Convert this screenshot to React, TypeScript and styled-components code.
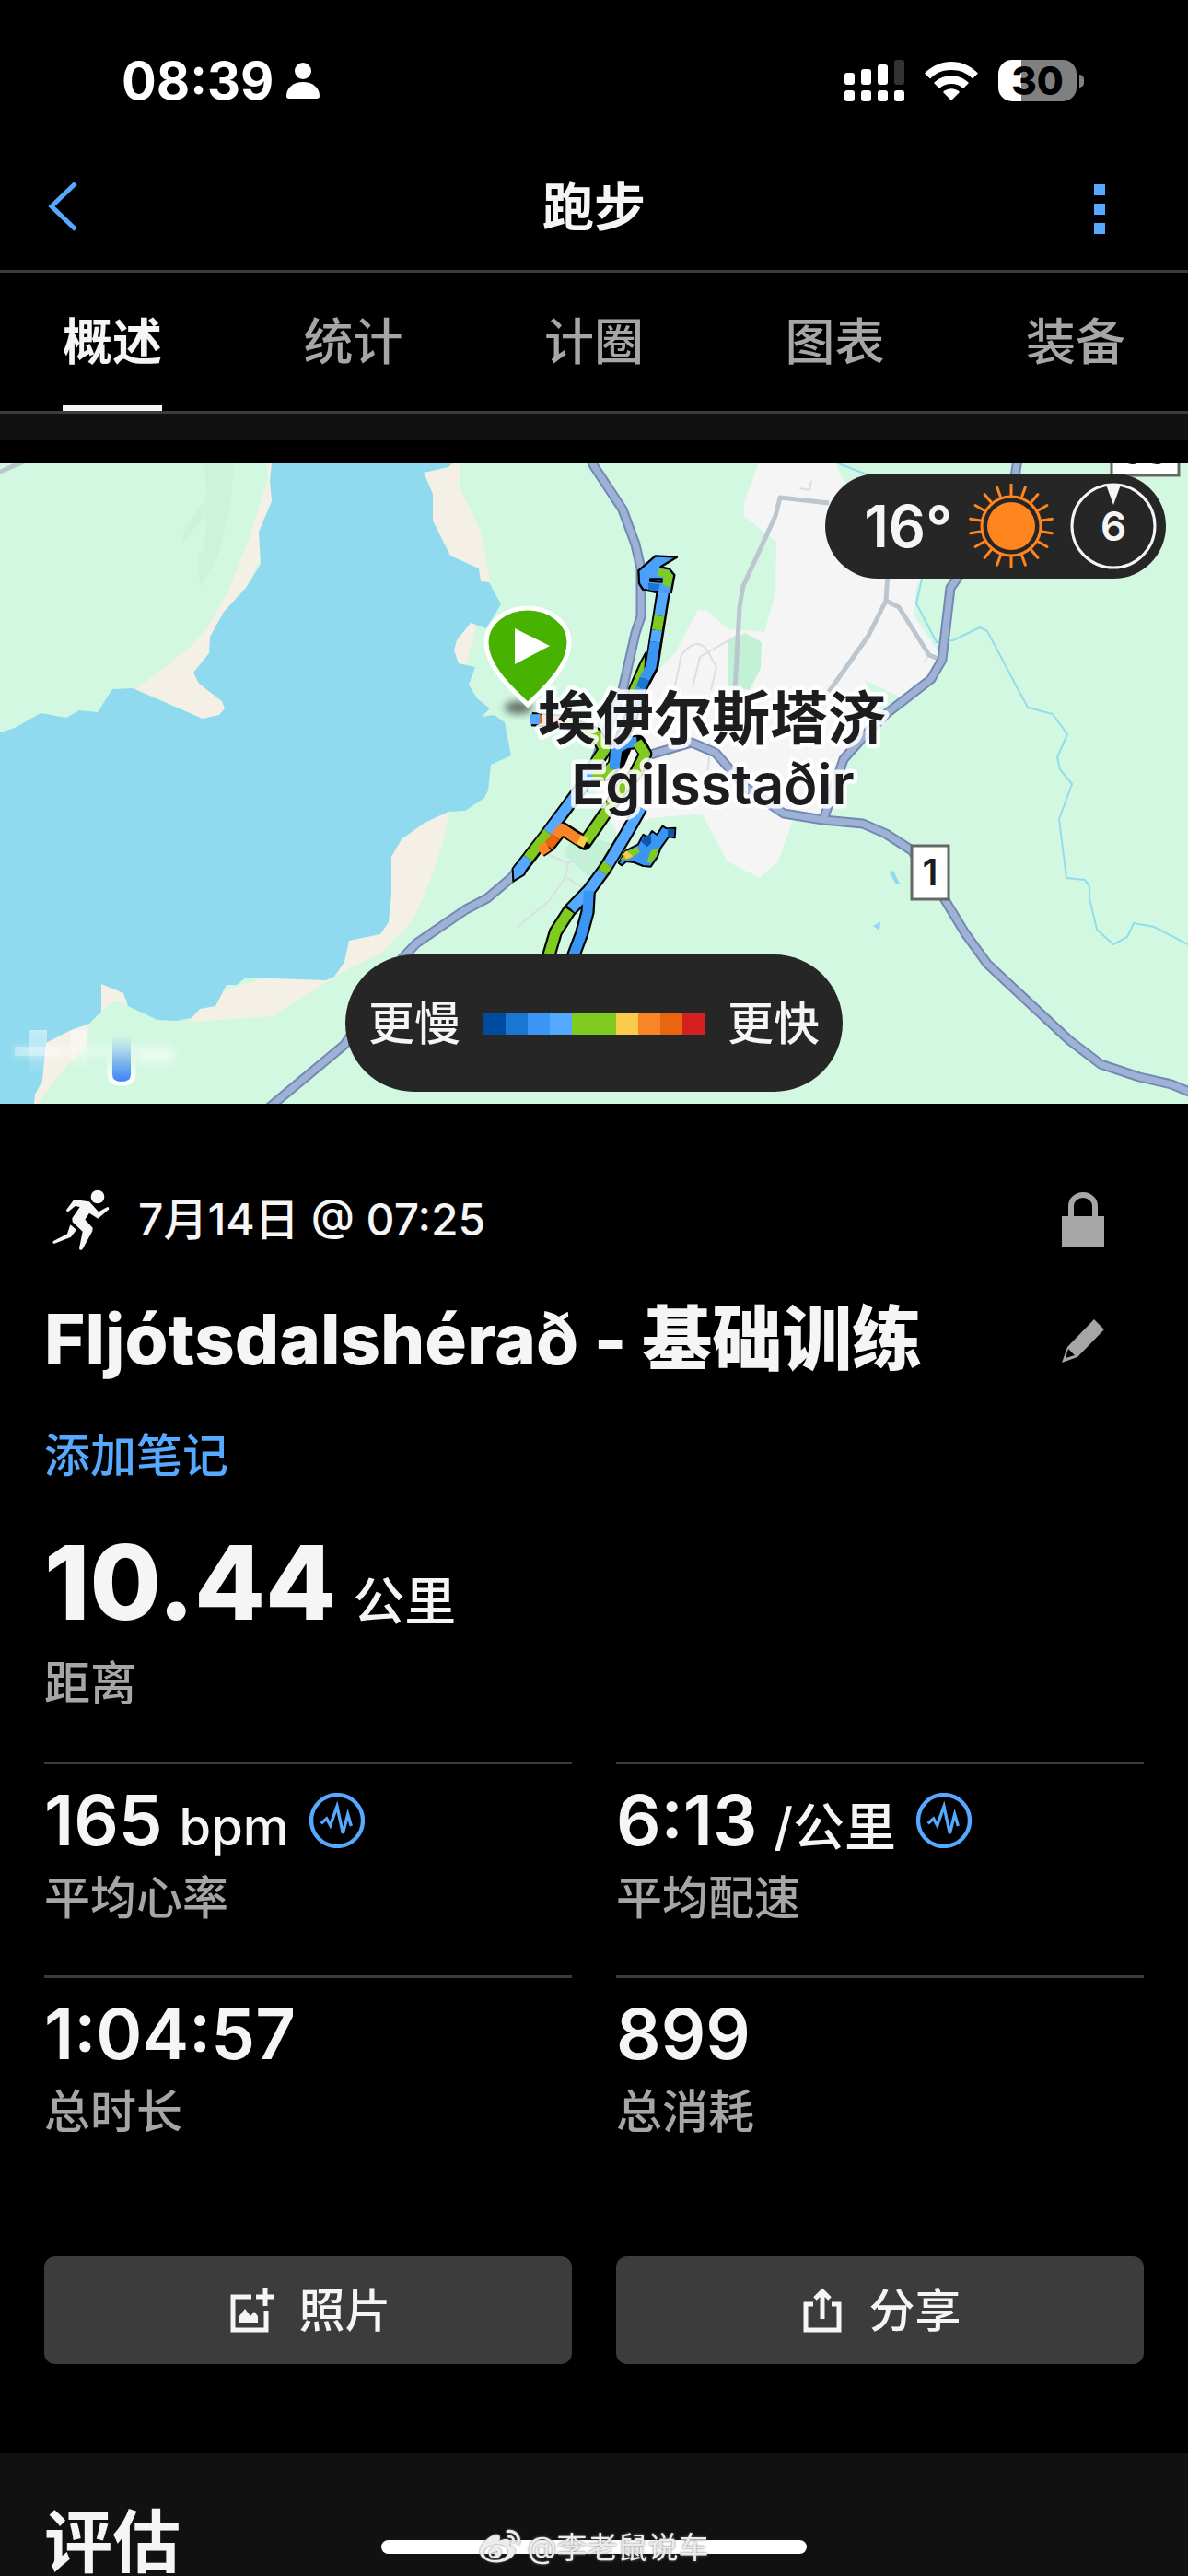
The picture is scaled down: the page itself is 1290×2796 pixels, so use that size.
import React from "react";
import styled, { createGlobalStyle } from "styled-components";
import { FaWeibo } from "react-icons/fa";

const color = {
  text: "#f5f5f5",
  muted: "#a6a6a6",
  line: "#3c3c3c",
  accent: "#55a9ff",
  panel: "#111111",
  pill: "#262626",
};

const GlobalStyle = createGlobalStyle`
  *, *::before, *::after { box-sizing: border-box; }
  html, body { margin: 0; background: #000; }
  body {
    font-family: Inter, "Noto Sans CJK SC", sans-serif;
    font-weight: 500;
    color: ${color.text};
  }
  h1, h2, p, dl, dt, dd { margin: 0; font-weight: inherit; }
  button {
    margin: 0;
    padding: 0;
    border: 0;
    background: none;
    color: inherit;
    font: inherit;
    cursor: pointer;
  }
  svg { display: block; flex: none; }
`;

const Page = styled.div`
  display: flex;
  flex-direction: column;
  min-height: 100vh;
  overflow: hidden;
`;

/* ---------- status bar ---------- */

const StatusBar = styled.div`
  display: flex;
  align-items: center;
  justify-content: space-between;
  height: 157px;
  padding: 18px 113px 0 132px;
  color: #fff;
`;

const StatusGroup = styled.div<{ $gap: number }>`
  display: flex;
  align-items: center;
  gap: ${(p) => p.$gap}px;
`;

const Clock = styled.span`
  font-size: 56px;
  font-weight: 700;
  line-height: 60px;
`;

const Battery = styled.div`
  display: flex;
  align-items: center;
  gap: 3px;
  &::after {
    content: "";
    width: 5px;
    height: 14px;
    border-radius: 0 7px 7px 0;
    background: #808080;
  }
`;

const BatteryBody = styled.span`
  width: 85px;
  height: 45px;
  border-radius: 15px;
  background: linear-gradient(90deg, #fff 0 30%, #808080 30%);
  color: #000;
  font-size: 42px;
  font-weight: 800;
  line-height: 45px;
  text-align: center;
`;

/* ---------- header and tabs ---------- */

const Header = styled.header`
  display: grid;
  grid-template-columns: 1fr auto 1fr;
  align-items: center;
  height: 139px;
  padding: 0 48px;
  border-bottom: 3px solid ${color.line};
  color: ${color.accent};
`;

const HeaderTitle = styled.h1`
  color: ${color.text};
  font-size: 56px;
  font-weight: 700;
  line-height: 64px;
`;

const BackButton = styled.button`
  justify-self: start;
`;

const MenuButton = styled.button`
  justify-self: end;
  padding: 4px 42px 0;
`;

const Tabs = styled.nav`
  display: flex;
  justify-content: space-between;
  padding: 0 68px;
  border-bottom: 3px solid ${color.line};
`;

const Tab = styled.button<{ $active?: boolean }>`
  height: 150px;
  border-top: 8px solid transparent;
  border-bottom: 6px solid ${(p) => (p.$active ? color.text : "transparent")};
  color: ${(p) => (p.$active ? color.text : color.muted)};
  font-size: 54px;
  font-weight: ${(p) => (p.$active ? 700 : 500)};
  line-height: 64px;
`;

const Strip = styled.div`
  height: 29px;
  margin-bottom: 24px;
  background: ${color.panel};
`;

/* ---------- map ---------- */

const MapFrame = styled.section`
  position: relative;
  height: 696px;
  overflow: hidden;
  background: #d2f8e1;
`;

const MapCanvas = styled.svg`
  width: 100%;
  height: 100%;
  font-family: Inter, "Noto Sans CJK SC", sans-serif;
`;

const WeatherPill = styled.div`
  position: absolute;
  top: 12px;
  right: 24px;
  display: flex;
  align-items: center;
  gap: 18px;
  height: 114px;
  padding: 0 10px 0 42px;
  border-radius: 57px;
  background: ${color.pill};
  font-size: 63px;
  font-weight: 600;
`;

const WindDial = styled.div`
  display: grid;
  place-items: center;
  font-size: 44px;
  > * { grid-area: 1 / 1; }
`;

const PacePill = styled.div`
  position: absolute;
  bottom: 13px;
  left: 50%;
  transform: translateX(-50%);
  display: flex;
  align-items: center;
  gap: 25px;
  height: 149px;
  padding: 0 25px;
  border-radius: 75px;
  background: ${color.pill};
  font-size: 50px;
  line-height: 60px;
  white-space: nowrap;
`;

const PaceScale = styled.div`
  display: flex;
`;

const PaceStep = styled.span<{ $color: string }>`
  width: 24px;
  height: 24px;
  background: ${(p) => p.$color};
`;

/* ---------- activity details ---------- */

const Details = styled.main`
  padding: 96px 48px;
`;

const Row = styled.div`
  display: flex;
  align-items: center;
  justify-content: space-between;
  padding-right: 42px;
`;

const DateLine = styled.div`
  display: flex;
  align-items: center;
  gap: 30px;
  height: 60px;
  padding-left: 8px;
  font-size: 48px;
  line-height: 60px;
`;

const TitleRow = styled(Row)`
  margin-top: 53px;
`;

const ActivityTitle = styled.h2`
  font-size: 76px;
  font-weight: 800;
  line-height: 92px;
`;

const NoteLink = styled.a`
  display: block;
  width: max-content;
  margin-top: 51px;
  color: ${color.accent};
  font-size: 50px;
  line-height: 60px;
  text-decoration: none;
`;

const Distance = styled.dl`
  display: flex;
  flex-direction: column-reverse;
  gap: 24px;
  margin: 51px 0 55px;
`;

const Label = styled.dt`
  color: ${color.muted};
  font-size: 50px;
  line-height: 60px;
`;

const Value = styled.dd<{ $large?: boolean }>`
  display: flex;
  align-items: baseline;
  gap: 18px;
  height: ${(p) => (p.$large ? 112 : 76)}px;
  font-size: ${(p) => (p.$large ? 112 : 76)}px;
  font-weight: ${(p) => (p.$large ? 800 : 600)};
  line-height: ${(p) => (p.$large ? 112 : 76)}px;
`;

const Unit = styled.span`
  font-size: 56px;
  font-weight: 500;
`;

const ZoneButton = styled.button`
  align-self: center;
  padding: 2px 4px 0;
`;

const MetricGrid = styled.dl`
  display: grid;
  grid-template-columns: 1fr 1fr;
  column-gap: 48px;
`;

const Metric = styled.div`
  display: flex;
  flex-direction: column-reverse;
  gap: 17px;
  padding: 22px 0 54px;
  border-top: 3px solid ${color.line};
`;

const Actions = styled.div`
  display: grid;
  grid-template-columns: 1fr 1fr;
  gap: 48px;
  margin-top: 73px;
`;

const ActionButton = styled.button`
  display: flex;
  align-items: center;
  justify-content: center;
  gap: 26px;
  height: 117px;
  padding-left: 4px;
  border-radius: 12px;
  background: ${color.line};
  font-size: 50px;
  line-height: 60px;
`;

const Review = styled.section`
  flex: 1;
  padding: 60px 48px 0;
  background: ${color.panel};
`;

const ReviewTitle = styled.h2`
  font-size: 74px;
  font-weight: 700;
  line-height: 74px;
`;

/* ---------- bottom overlay ---------- */

const HomeIndicator = styled.div`
  position: fixed;
  bottom: 24px;
  left: 50%;
  display: flex;
  align-items: center;
  justify-content: center;
  width: 462px;
  height: 15px;
  transform: translateX(-50%);
  border-radius: 8px;
  background: #fff;
`;

const Watermark = styled.span`
  display: flex;
  align-items: center;
  gap: 8px;
  color: #ececec;
  font-size: 33px;
  font-weight: 400;
  line-height: 40px;
  white-space: nowrap;
  text-shadow: 0 0 3px #777;
  svg { filter: drop-shadow(0 0 1px #777); }
`;

/* ---------- icons ---------- */

const PersonIcon = () => (
  <svg width="36" height="39" viewBox="0 0 36 39" fill="currentColor">
    <circle cx="18" cy="9" r="9" />
    <path d="M0 36c0-9 8-15 18-15s18 6 18 15c0 2-1 3-3 3H3c-2 0-3-1-3-3z" />
  </svg>
);

const SignalIcon = () => (
  <svg width="65" height="45" viewBox="0 0 65 45" fill="#fff">
    <rect x="0" y="14" width="11" height="13" rx="3" />
    <rect x="18" y="10" width="11" height="17" rx="3" />
    <rect x="36" y="5" width="11" height="22" rx="3" />
    <rect x="54" y="0" width="11" height="27" rx="3" fill="#333" />
    {[0, 18, 36, 54].map((x) => (
      <rect key={x} x={x} y="33" width="11" height="12" rx="3" />
    ))}
  </svg>
);

const WifiIcon = () => (
  <svg width="58" height="42" viewBox="0 0 58 42" fill="#fff">
    <path d="M0 12.500C8 4.500 18 0 29 0s21 4.500 29 12.500l-6 6C46 12 38 9 29 9S12 12 6 18.500z" />
    <path d="M10 23c5-5 12-8 19-8s14 3 19 8l-6 6c-3.500-3.500-8-5-13-5s-9.500 1.500-13 5z" />
    <path d="M20 33c5-5 13-5 18 0l-9 9z" />
  </svg>
);

const BackIcon = () => (
  <svg width="36" height="54" viewBox="0 0 36 54" fill="none" stroke="currentColor" strokeWidth="5">
    <path d="M34 1 8 26l26 25" />
  </svg>
);

const MoreIcon = () => (
  <svg width="12" height="54" viewBox="0 0 12 54" fill="currentColor">
    <path d="M0 0h12v12H0zM0 21h12v12H0zM0 42h12v12H0z" />
  </svg>
);

const SunIcon = () => {
  const rays = Array.from({ length: 18 }, (_, i) => i * 20);
  return (
    <svg width="92" height="92" viewBox="-46 -46 92 92" stroke="#ff851f" strokeWidth="3" strokeLinecap="round">
      <circle r="26" fill="#ff851f" stroke="none" />
      <circle r="32" fill="none" />
      {rays.map((a) => (
        <path key={a} d="M0-34V-45" transform={`rotate(${a})`} />
      ))}
    </svg>
  );
};

const DialIcon = () => (
  <svg width="94" height="94" viewBox="-47 -47 94 94">
    <circle r="45" fill="none" stroke="#f5f5f5" strokeWidth="3" />
    <path d="M-8-45H8L0-23z" fill="#f5f5f5" />
  </svg>
);

const RunnerIcon = () => (
  <svg width="64" height="66" viewBox="0 0 192 198" fill="#f5f5f5">
    <circle cx="150" cy="24" r="22" />
    <path d="M73 33 123 40 153 73 182 57Q189 58 186 65L151 95 123 77 109 98 134 125 133 136 101 194Q92 202 90 192L101 137 68 106 67 94 92 57 77 54 56 71Q48 74 48 67z" />
    <path d="M61 115 81 131 63 155 10 176Q2 177 5 169L51 145z" />
  </svg>
);

const LockIcon = () => (
  <svg width="48" height="60" viewBox="0 0 48 60">
    <path d="M11 28V15a13 12 0 0 1 26 0v13" fill="none" stroke="#a6a6a6" strokeWidth="6" />
    <path d="M1 26h46v34H1z" fill="#a6a6a6" />
  </svg>
);

const PencilIcon = () => (
  <svg width="48" height="54" viewBox="0 -6 48 54" fill="#a6a6a6">
    <path fillRule="evenodd" d="M36 0 47 11 18 41 1 47 7 30zM8 32 5 42 15 39z" />
  </svg>
);

const PulseIcon = () => (
  <svg width="60" height="60" viewBox="0 0 180 180" fill="none" stroke="#55a9ff">
    <circle cx="90" cy="90" r="84" strokeWidth="13" />
    <path d="M38 100 56 84 68 106 90 44 109 132 125 70 136 108" strokeWidth="10" />
  </svg>
);

const PhotoIcon = () => (
  <svg width="50" height="50" viewBox="0 0 50 50" fill="none" stroke="#f5f5f5" strokeWidth="5">
    <path d="M24 10H4v36h36V25M29 10h20M39 0v20" />
    <path d="M10 38V32l7-9 6 8 4-5 4 5v7z" fill="#f5f5f5" stroke="none" />
  </svg>
);

const ShareIcon = () => (
  <svg width="46" height="50" viewBox="0 0 46 50" fill="none" stroke="#f5f5f5" strokeWidth="5">
    <path d="M11 18H3v28h36V18h-8M21 34V5M13 12l8-8 8 8" />
  </svg>
);

/* ---------- map drawing ---------- */

const sand = [
  "290,0 291,16 271,82 247,141 226,178 210,197 181,221 150,244 144,248 220,280 250,270 260,150 310,50 310,0",
  "500,0 499,27 522,75 532,128 532,134 500,130 440,60 440,0",
  "517,174 517,180 506,220 500,225 480,218 480,170",
  "487,379 487,382 481,412 465,459 448,497 415,532 370,554 296,601 208,607 190,590 350,540 400,450 460,370",
  "110,560 140,570 139,590 128,584 119,587 97,610 94,631 62,667 41,696 20,696 60,610",
];

const water =
  "295,0 293,20 295,42 281,75 283,110 267,136 243,162 228,189 227,207 210,228 216,240 241,259 244,267 238,274 220,278 144,245 122,246 106,271 86,269 72,277 44,272 16,288 -2,294 -2,698 37,696 38,686 46,671 50,630 77,616 97,609 110,596 110,566 134,576 139,590 171,605 191,606 208,603 217,593 234,590 246,567 257,567 267,559 354,562 363,558 374,542 379,519 413,512 422,499 425,469 425,428 436,409 461,391 487,379 505,378 526,364 530,356 533,328 555,318 548,282 537,274 523,276 532,267 518,256 509,241 516,222 498,218 493,204 496,193 511,174 528,180 544,154 531,130 522,129 520,115 489,101 470,63 470,34 460,11 487,5 492,0";

const town =
  "824,0 908,0 912,14 1003,126 995,134 994,148 993,167 1021,209 1023,214 1011,235 980,256 941,237 938,256 962,273 933,299 912,327 892,384 861,388 845,433 825,451 790,433 762,381 707,386 670,402 645,355 698,242 733,207 758,160 768,161 791,181 830,184 842,143 843,86 808,58 808,44";

const highways = [
  "M290 702 374 632 436 539 452 522 506 485 529 473 555 451 610 380 645 327 676 247 690 185 696 167V115L690 89 676 51 645 4 640-6",
  "M894 388 916 322 941 294 962 273 1011 235 1023 214 1032 136 1044 119 1097 49 1105-4",
  "M703 318 751 304 777 315 810 353 851 381 894 388 937 392 962 403 990 421 1025 473 1048 511 1072 544 1161 627 1195 653 1237 667 1272 675 1296 685",
];

const streets = [
  "M900 44 847 38 842 58 807 134 803 157 798 247",
  "M964 120 962 150 943 188 895 256",
  "M962 150 976 157 1009 209 1021 214",
  "M-2 11 28-2",
];

const lanes = [
  "M733 242 740 209Q756 188 768 204L778 222 772 247",
  "M752 244 760 211 800 188",
  "M868 28 879 30 881 20",
  "M561 505 596 476 614 450 645 469M592 424 617 435 638 426M614 450 617 435",
  "M768 340 772 300M1003 217 1009 209",
];

const stream =
  "M908 0 941 13 960 14M1001 126 995 153 1017 195 1035 193 1064 179 1072 183 1116 266 1143 273 1159 295 1148 320 1151 333 1164 349 1150 387 1158 451 1178 453 1183 460V473L1191 507 1209 523 1224 515 1231 500 1253 504 1290 523";

/* The track is drawn on its own 3x grid, first the dark casing, then one stroke per pace band. */
const casing = [
  "M722 180 683 430 646 500 610 610 570 700 560 765",
  "M292 602 400 610 500 650 530 700 450 830 335 985 250 1095",
  "M450 778 530 782 575 740 600 680 640 676 662 715 630 780 585 830 520 925 465 1005 390 958 350 1010 320 1030",
  "M648 890 600 975 530 1090 478 1160 415 1225 370 1295 345 1380",
  "M478 1160 474 1230 455 1300 425 1380",
];

const paceBands: [string, string][] = [
  ["#55aaff", "M722 180 708 265"],
  ["#7fcb1f", "M708 265 700 312"],
  ["#55aaff", "M700 312 694 350"],
  ["#3b95f5", "M694 350 681 430 660 470"],
  ["#1976d2", "M660 470 648 500"],
  ["#3b95f5", "M648 500 610 610 570 700 560 765"],
  ["#55aaff", "M286 602H320"],
  ["#ea650f", "M318 604 400 610"],
  ["#7fcb1f", "M400 610 500 650 530 700 500 745"],
  ["#55aaff", "M500 745 450 830 345 970"],
  ["#7fcb1f", "M345 970 280 1055"],
  ["#55aaff", "M280 1055 245 1100"],
  ["#55aaff", "M450 778H490"],
  ["#7fcb1f", "M490 778 530 782 565 745"],
  ["#3b95f5", "M562 765 565 700 600 680 635 676"],
  ["#7fcb1f", "M635 676 662 715 630 780 585 830 520 925 468 1000"],
  ["#fdcb4b", "M468 1005 438 990"],
  ["#fa8526", "M445 995 390 958 370 985"],
  ["#ea650f", "M370 985 345 1015"],
  ["#fa8526", "M345 1015 318 1033"],
  ["#55aaff", "M648 890 600 975 540 1075"],
  ["#7fcb1f", "M540 1075 522 1100"],
  ["#55aaff", "M522 1100 478 1160 420 1220"],
  ["#7fcb1f", "M415 1225 370 1295 345 1380"],
  ["#3b95f5", "M478 1160 474 1230 455 1300 425 1380"],
];

const Track = () => (
  <svg x="480" y="78" width="320" height="480" viewBox="0 0 960 1440" fill="none" strokeLinejoin="round">
    {casing.map((d) => (
      <path key={d} d={d} stroke="#000" strokeWidth="46" />
    ))}
    <path d="M610 500 645 420 664 385 660 470 625 560 600 560z" fill="#7fcb1f" stroke="#000" strokeWidth="6" />
    <path d="M230 1088 232 1130 268 1108 280 1080 250 1065z" fill="#55aaff" stroke="#000" strokeWidth="6" />
    {paceBands.map(([stroke, d]) => (
      <path key={d} d={d} stroke={stroke} strokeWidth="33" />
    ))}
    <path
      d="M705 190 655 180 642 160 640 118 695 70 765 74 712 106 740 112 757 132 746 192"
      fill="#4aa0fa"
      stroke="#000"
      strokeWidth="7"
    />
    <path d="M703 112 738 116 752 134 744 175 718 162 722 138 703 136z" fill="#7fcb1f" />
    <path d="M672 158 710 162 704 186 672 180z" fill="#1976d2" />
    <path d="M678 145H716V155L678 152z" stroke="#000" strokeWidth="6" />
    <path
      d="M575 1070 598 1030 638 1010 655 978 672 985 684 966 700 978 718 950 732 958 760 956 758 988 738 985 712 1022 702 1050 680 1082 655 1080 625 1068 600 1065 586 1078z"
      fill="#3b95f5"
      stroke="#000"
      strokeWidth="6"
    />
    <path d="M735 958 757 960 755 985 735 980zM660 985 680 975 682 1005 668 1018 648 1000z" fill="#0d57ad" />
    <path d="M580 1060 602 1032 636 1018 645 1035 612 1056zM680 1030 705 1022 698 1048 680 1072 668 1066z" fill="#7fcb1f" />
    <path d="M590 1040 600 1030 622 1048 600 1058z" fill="#fdcb4b" />
    <ellipse cx="583" cy="828" rx="15" ry="22" fill="#7fcb1f" />
  </svg>
);

const StartPin = () => (
  <g>
    <ellipse cx="563" cy="266" rx="15" ry="7" fill="#000" opacity=".55" filter="url(#soft)" />
    <path
      d="M573 263C556 246 528 222 528 195a45 37 0 0 1 90 0C618 222 590 246 573 263z"
      fill="#48b200"
      stroke="#fff"
      strokeWidth="5"
    />
    <path d="M559 180 597 199 559 219z" fill="#fff" />
  </g>
);

const MapDrawing = () => (
  <MapCanvas viewBox="0 0 1290 696" preserveAspectRatio="xMidYMid slice" role="img" aria-label="路线地图">
    <defs>
      <filter id="soft" x="-50%" y="-50%" width="200%" height="200%">
        <feGaussianBlur stdDeviation="4" />
      </filter>
      <linearGradient id="drop" x1="0" y1="0" x2="0" y2="1">
        <stop offset="0" stopColor="#4a8af4" stopOpacity="0" />
        <stop offset="1" stopColor="#3b82f6" />
      </linearGradient>
      <linearGradient id="rim" x1="0" y1="0" x2="0" y2="1">
        <stop offset="0.300" stopColor="#fff" stopOpacity="0" />
        <stop offset="1" stopColor="#fff" />
      </linearGradient>
      <linearGradient id="fade" x1="0" y1="0" x2="0" y2="1">
        <stop offset="0" stopColor="#fff" stopOpacity=".5" />
        <stop offset="1" stopColor="#fff" stopOpacity="0" />
      </linearGradient>
    </defs>
    <rect width="1290" height="696" fill="#d2f8e1" />
    <polygon
      points="222,0 224,40 202,68 194,93 224,56 222,91 215,101 217,136 237,101 251,44 254,0"
      fill="#cef3dd"
    />
    {sand.map((points) => (
      <polygon key={points} points={points} fill="#f4f0e6" />
    ))}
    <polygon points={water} fill="#8fdaee" />
    <polygon points={town} fill="#f5f5f5" />
    <polygon points="791,193 809,185 827,195 826,223 814,247 790,242" fill="#c2f1d5" />
    <polygon points="625,400 668,415 640,450 612,425" fill="#c2f1d5" />
    <polygon points="966,445 970,443 977,457 973,458" fill="#8fdaee" />
    <polygon points="948,503 956,498 955,508" fill="#8fdaee" />
    <g fill="none" strokeLinejoin="round">
      <path d={stream} stroke="#93dcee" strokeWidth="2" />
      {lanes.map((d) => (
        <path key={d} d={d} stroke="#d9dfe4" strokeWidth="2" />
      ))}
      {streets.map((d) => (
        <path key={d} d={d} stroke="#bcc6cf" strokeWidth="5" />
      ))}
      {highways.map((d) => (
        <path key={d} d={d} stroke="#7388b3" strokeWidth="11" />
      ))}
      {highways.map((d) => (
        <path key={d} d={d} stroke="#9fb2d6" strokeWidth="7" />
      ))}
    </g>
    <Track />
    <StartPin />
    <g fill="#1d1d1f" stroke="#fff" strokeOpacity=".85" strokeWidth="9" strokeLinejoin="round" paintOrder="stroke" textAnchor="middle">
      <text x="773" y="300" fontSize="63" fontWeight="700">埃伊尔斯塔济</text>
      <text x="774" y="371" fontSize="61" fontWeight="600">Egilsstaðir</text>
    </g>
    <g fill="#fff" stroke="#666" strokeWidth="3">
      <rect x="990" y="416" width="40" height="58" />
      <rect x="1207" y="-40" width="73" height="54" />
    </g>
    <g fill="#1d1d1f" fontSize="40" fontWeight="600" textAnchor="middle">
      <text x="1010" y="459">1</text>
      <text x="1243" y="2">93</text>
    </g>
    <g>
      <path d="M31 616h20v50H31zM77 616h17v40H77z" fill="url(#fade)" />
      <path d="M16 633h170v12H16z" fill="#fff" opacity=".3" filter="url(#soft)" />
      <path d="M16 634h50v10H16z" fill="#fff" opacity=".3" />
      <path d="M150 637h38q3 8 0 16h-38z" fill="#fff" opacity=".4" filter="url(#soft)" />
      <path d="M119 625v38q0 11 13 11t13-11v-38" fill="none" stroke="url(#rim)" strokeWidth="5" />
      <path d="M122 622h20v42q0 8-10 8t-10-8z" fill="url(#drop)" />
    </g>
  </MapCanvas>
);

/* ---------- page ---------- */

const tabs = ["概述", "统计", "计圈", "图表", "装备"];

const paceColors = [
  "#004a9f", "#1976d2", "#3b95f5", "#55aaff", "#7fcb1f",
  "#7fcb1f", "#fdcb4b", "#fa8526", "#ea650f", "#d4201f",
];

const metrics = [
  { label: "平均心率", value: "165", unit: "bpm" },
  { label: "平均配速", value: "6:13", unit: "/公里" },
  { label: "总时长", value: "1:04:57" },
  { label: "总消耗", value: "899" },
];

export default function App() {
  return (
    <Page>
      <GlobalStyle />
      <StatusBar>
        <StatusGroup $gap={14}>
          <Clock>08:39</Clock>
          <PersonIcon />
        </StatusGroup>
        <StatusGroup $gap={22}>
          <SignalIcon />
          <WifiIcon />
          <Battery>
            <BatteryBody>30</BatteryBody>
          </Battery>
        </StatusGroup>
      </StatusBar>

      <Header>
        <BackButton aria-label="返回"><BackIcon /></BackButton>
        <HeaderTitle>跑步</HeaderTitle>
        <MenuButton aria-label="更多"><MoreIcon /></MenuButton>
      </Header>

      <Tabs>
        {tabs.map((tab, i) => (
          <Tab key={tab} $active={i === 0} aria-current={i === 0 ? "page" : undefined}>
            {tab}
          </Tab>
        ))}
      </Tabs>
      <Strip />

      <MapFrame>
        <MapDrawing />
        <WeatherPill>
          <span>16°</span>
          <SunIcon />
          <WindDial>
            <DialIcon />
            <span>6</span>
          </WindDial>
        </WeatherPill>
        <PacePill>
          <span>更慢</span>
          <PaceScale>
            {paceColors.map((c, i) => (
              <PaceStep key={i} $color={c} />
            ))}
          </PaceScale>
          <span>更快</span>
        </PacePill>
      </MapFrame>

      <Details>
        <Row>
          <DateLine>
            <RunnerIcon />
            <span>7月14日 @ 07:25</span>
          </DateLine>
          <button aria-label="隐私设置"><LockIcon /></button>
        </Row>
        <TitleRow>
          <ActivityTitle>Fljótsdalshérað - 基础训练</ActivityTitle>
          <button aria-label="编辑名称"><PencilIcon /></button>
        </TitleRow>
        <NoteLink href="#notes">添加笔记</NoteLink>

        <Distance>
          <Label>距离</Label>
          <Value $large>
            10.44<Unit>公里</Unit>
          </Value>
        </Distance>

        <MetricGrid>
          {metrics.map((m) => (
            <Metric key={m.label}>
              <Label>{m.label}</Label>
              <Value>
                {m.value}
                {m.unit && <Unit>{m.unit}</Unit>}
                {m.unit && (
                  <ZoneButton aria-label={`${m.label}图表`}><PulseIcon /></ZoneButton>
                )}
              </Value>
            </Metric>
          ))}
        </MetricGrid>

        <Actions>
          <ActionButton><PhotoIcon />照片</ActionButton>
          <ActionButton><ShareIcon />分享</ActionButton>
        </Actions>
      </Details>

      <Review>
        <ReviewTitle>评估</ReviewTitle>
      </Review>

      <HomeIndicator>
        <Watermark>
          <FaWeibo size={44} />
          @李老鼠说车
        </Watermark>
      </HomeIndicator>
    </Page>
  );
}
